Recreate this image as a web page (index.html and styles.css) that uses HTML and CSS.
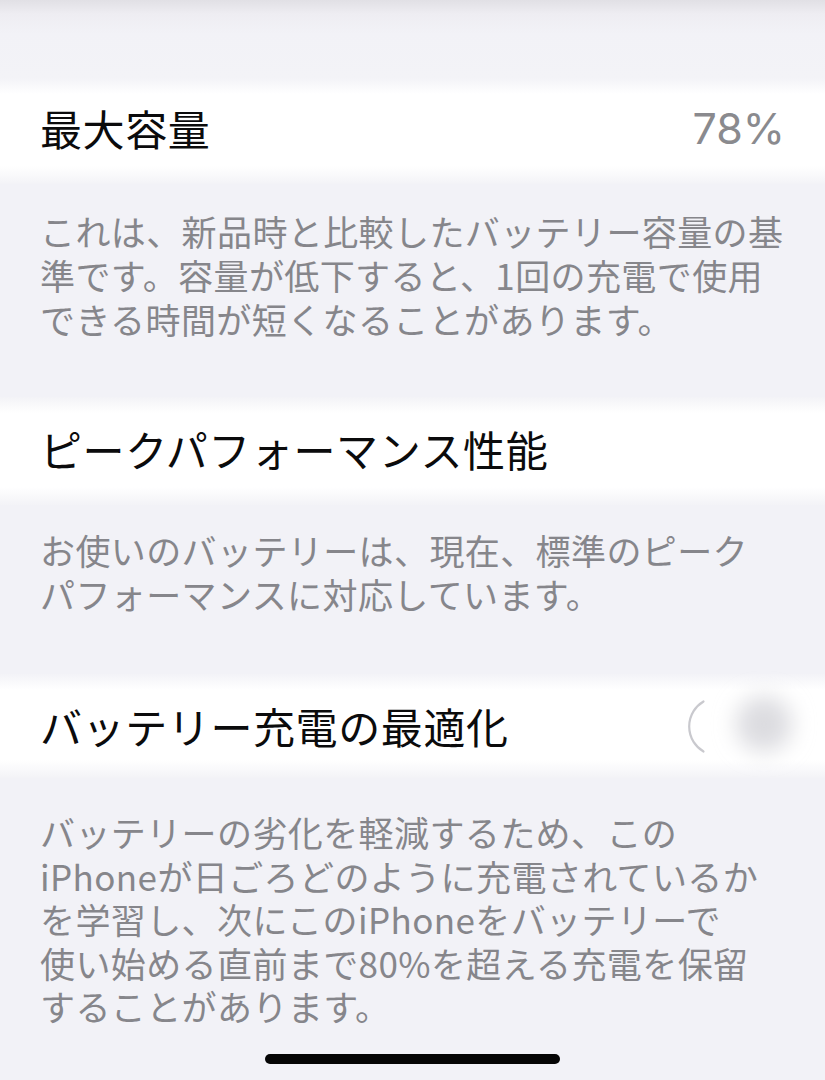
FILE: index.html
```html
<!DOCTYPE html>
<html lang="ja">
<head>
<meta charset="utf-8">
<title>バッテリーの状態と充電</title>
<link rel="stylesheet" href="styles.css">
</head>
<body>
<div class="screen">
  <div class="top-fade"></div>

  <div class="row row-capacity">
    <span class="row-title">最大容量</span>
    <span class="row-value">78%</span>
  </div>
  <p class="note note-capacity">これは、新品時と比較したバッテリー容量の基<br>準です。容量が低下すると、1回の充電で使用<br>できる時間が短くなることがあります。</p>

  <div class="row row-peak">
    <span class="row-title">ピークパフォーマンス性能</span>
  </div>
  <p class="note note-peak">お使いのバッテリーは、現在、標準のピーク<br>パフォーマンスに対応しています。</p>

  <div class="row row-optimize">
    <span class="row-title">バッテリー充電の最適化</span>
    <span class="toggle" aria-hidden="true">
      <svg width="110" height="70" viewBox="0 0 110 70">
        <defs>
          <filter id="soft" x="-80%" y="-80%" width="260%" height="260%">
            <feGaussianBlur stdDeviation="11"/>
          </filter>
        </defs>
        <!-- knob, blurred mid-slide -->
        <circle cx="77" cy="33" r="28" fill="#dcdce0" filter="url(#soft)"/>
        <!-- left edge of the track -->
        <path d="M 16.5 10.5 A 29 29 0 0 0 16.5 60.5" fill="none" stroke="#c9c9ce" stroke-width="2.2" stroke-linecap="round"/>
      </svg>
    </span>
  </div>
  <p class="note note-optimize">バッテリーの劣化を軽減するため、この<br>iPhoneが日ごろどのように充電されているか<br>を学習し、次にこのiPhoneをバッテリーで<br>使い始める直前まで80%を超える充電を保留<br>することがあります。</p>

  <div class="home-bar"></div>
</div>
</body>
</html>
```

FILE: styles.css
```css
html, body {
  margin: 0;
  padding: 0;
  background: #f2f2f7;
}

.screen {
  width: 825px;
  height: 1080px;
  overflow: hidden;
  display: flex;
  flex-direction: column;
  background: #f2f2f7;
  font-family: "Noto Sans CJK JP", "Noto Sans", sans-serif;
}

.top-fade {
  height: 78px;
  flex: none;
  background: linear-gradient(to bottom, #e1e0e5 0, #eeedf2 14px, #f2f2f7 34px, #f3f3f7 100%);
}

/* white grouped rows with soft top and bottom edges */
.row {
  flex: none;
  height: 106px;
  display: flex;
  align-items: center;
  justify-content: space-between;
  padding: 0 40px 0 40px;
  box-sizing: border-box;
  background: linear-gradient(to bottom, #f3f3f7 0, #ffffff 16px, #ffffff calc(100% - 18px), #f3f3f7 100%);
}

.row-title {
  font-size: 42px;
  font-weight: 400;
  color: #0b0b0c;
  letter-spacing: 0.6px;
  line-height: 1;
}

.row-value {
  font-family: Inter, "Noto Sans", sans-serif;
  font-size: 43px;
  font-weight: 400;
  color: #8a8a8e;
  line-height: 1;
}

.row-capacity { padding-bottom: 6px; }
.row-peak { height: 108px; padding-bottom: 4px; }
.row-optimize { height: 104px; }

.note {
  margin: 0;
  padding: 25px 40px 0 40px;
  font-size: 35px;
  line-height: 44px;
  letter-spacing: 0.4px;
  color: #86868b;
}

.note-capacity { padding-bottom: 56px; }
.note-peak { padding-top: 23px; padding-bottom: 58px; }
.note-optimize { padding-top: 32px; line-height: 43.5px; }

.toggle {
  display: block;
  width: 110px;
  height: 70px;
  margin-right: -12px;
}

.toggle svg {
  display: block;
  overflow: visible;
}

.home-bar {
  flex: none;
  width: 295px;
  height: 10px;
  margin: 26px auto 0;
  border-radius: 5px;
  background: #050505;
}
```
